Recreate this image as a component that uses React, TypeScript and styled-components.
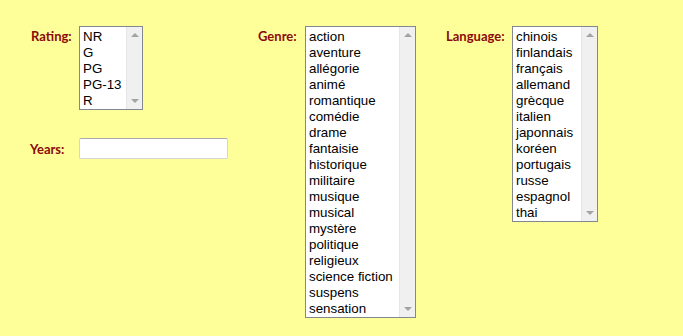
import React from "react";
import styled, { createGlobalStyle } from "styled-components";

const GlobalStyle = createGlobalStyle`
  html, body {
    margin: 0;
    padding: 0;
    background: #ffff99;
  }
  body {
    font-family: "Liberation Sans", Arial, sans-serif;
  }
`;

const ratings = ["NR", "G", "PG", "PG-13", "R"];
const genres = [
    "action",
    "aventure",
    "allégorie",
    "animé",
    "romantique",
    "comédie",
    "drame",
    "fantaisie",
    "historique",
    "militaire",
    "musique",
    "musical",
    "mystère",
    "politique",
    "religieux",
    "science fiction",
    "suspens",
    "sensation",
];
const languages = [
    "chinois",
    "finlandais",
    "français",
    "allemand",
    "grècque",
    "italien",
    "japonnais",
    "koréen",
    "portugais",
    "russe",
    "espagnol",
    "thai",
];

const Page = styled.div`
    display: flex;
    align-items: flex-start;
    padding: 26px 0 0 30px;
    width: 683px;
    height: 336px;
    box-sizing: border-box;
    background: #ffff99;
`;

const Column = styled.div<{ $width: number }>`
    display: flex;
    flex-direction: column;
    gap: 28px;
    width: ${(p) => p.$width}px;
`;

const Field = styled.div<{ $center?: boolean }>`
    display: flex;
    align-items: ${(p) => (p.$center ? "center" : "flex-start")};
`;

const Label = styled.label<{ $width: number; $left?: number; $top?: number }>`
    width: ${(p) => p.$width}px;
    padding-left: ${(p) => p.$left ?? 0}px;
    padding-top: ${(p) => p.$top ?? 2}px;
    box-sizing: border-box;
    font-family: Lato, "Open Sans", sans-serif;
    font-weight: bold;
    font-size: 13px;
    line-height: 16px;
    color: #8b0a0a;
`;

const ListBox = styled.div<{ $width: number }>`
    display: flex;
    width: ${(p) => p.$width}px;
    border: 1px solid #828790;
    background: #ffffff;
    box-sizing: border-box;
`;

const Options = styled.ul`
    flex: 1;
    list-style: none;
    margin: 0;
    padding: 2px 0 0 3px;
`;

const Option = styled.li`
    font-family: "Liberation Sans", Arial, sans-serif;
    font-size: 13.33px;
    line-height: 16px;
    color: #000;
    white-space: nowrap;
`;

const ScrollTrack = styled.div`
    width: 15px;
    display: flex;
    flex-direction: column;
    justify-content: space-between;
    align-items: center;
    background: #f0f0f0;
    border-left: 1px solid #e6e6e6;
    padding: 6px 0 6px;
`;

const Arrow = styled.div<{ $down?: boolean }>`
    width: 0;
    height: 0;
    border-left: 4px solid transparent;
    border-right: 4px solid transparent;
    ${(p) =>
        p.$down
            ? "border-top: 4px solid #a3a3a3;"
            : "border-bottom: 4px solid #a3a3a3;"}
`;

const TextInput = styled.input`
    width: 149px;
    height: 21px;
    box-sizing: border-box;
    border: 1px solid #d5d5d5;
    border-top-color: #ababab;
    border-radius: 2px;
    background: #fff;
    padding: 0 3px;
    outline: none;
`;

function List({ items, width }: { items: string[]; width: number }) {
    return (
        <ListBox $width={width}>
            <Options>
                {items.map((i) => (
                    <Option key={i}>{i}</Option>
                ))}
            </Options>
            <ScrollTrack>
                <Arrow />
                <Arrow $down />
            </ScrollTrack>
        </ListBox>
    );
}

export default function App() {
    return (
        <>
            <GlobalStyle />
            <Page>
                <Column $width={228}>
                    <Field>
                        <Label $width={49} $left={1}>
                            Rating:
                        </Label>
                        <List items={ratings} width={64} />
                    </Field>
                    <Field $center>
                        <Label $width={49} $top={0}>
                            Years:
                        </Label>
                        <TextInput type="text" />
                    </Field>
                </Column>
                <Column $width={188}>
                    <Field>
                        <Label $width={47}>Genre:</Label>
                        <List items={genres} width={111} />
                    </Field>
                </Column>
                <Column $width={160}>
                    <Field>
                        <Label $width={66}>Language:</Label>
                        <List items={languages} width={86} />
                    </Field>
                </Column>
            </Page>
        </>
    );
}
